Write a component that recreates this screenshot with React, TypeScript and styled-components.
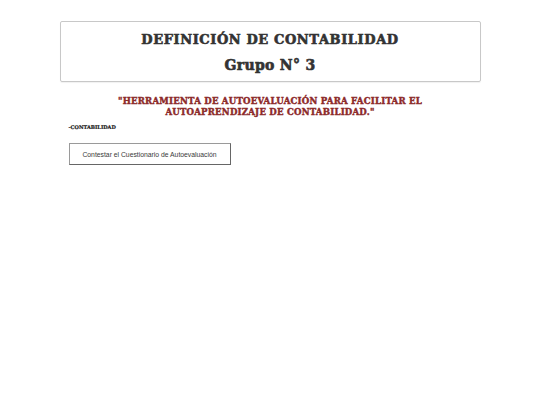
import React from "react";
import styled, { createGlobalStyle } from "styled-components";

const Global = createGlobalStyle`
  html, body { margin: 0; padding: 0; background: #fff; }
  body { font-family: "Liberation Sans", Arial, sans-serif; }
`;

const Page = styled.div`
  width: 421px;
  margin: 0 auto;
  padding-top: 21px;
`;

const Header = styled.header`
  border: 1px solid #c8c8c8;
  border-radius: 2px;
  height: 59px;
  display: flex;
  flex-direction: column;
  align-items: center;
  box-shadow: 0 1px 1px rgba(0,0,0,0.06);
`;

const Slab = styled.h1<{ $size: number; $top: number; $spacing: number }>`
  margin: ${(p) => p.$top}px 0 0;
  font-family: "DejaVu Serif", serif;
  font-weight: 900;
  font-size: ${(p) => p.$size}px;
  line-height: 1;
  color: #333;
  letter-spacing: ${(p) => p.$spacing}px;
  -webkit-text-stroke: 0.6px #333;
`;

const Motto = styled.p`
  margin: 14px 0 0;
  text-align: center;
  font-family: "DejaVu Serif", serif;
  font-weight: 900;
  font-size: 8.6px;
  line-height: 10.5px;
  color: #8c2a2a;
  letter-spacing: 0.2px;
  -webkit-text-stroke: 0.4px #8c2a2a;
`;

const Content = styled.div`
  padding-left: 9px;
`;

const Label = styled.div`
  margin-top: 7px;
  font-family: "DejaVu Serif", serif;
  font-weight: 900;
  font-size: 5px;
  color: #222;
  -webkit-text-stroke: 0.2px #222;
`;

const Button = styled.button`
  margin-top: 13px;
  width: 162px;
  height: 22px;
  background: #fff;
  border: 1px solid #9a9a9a;
  border-right-color: #666;
  border-bottom-color: #666;
  font-family: "Liberation Sans", Arial, sans-serif;
  font-size: 6.8px;
  color: #3a3a3a;
  padding: 0;
`;

export default function App() {
  return (
    <>
      <Global />
      <Page>
        <Header>
          <Slab $size={13} $top={11} $spacing={0.6}>DEFINICIÓN DE CONTABILIDAD</Slab>
          <Slab $size={14} $top={12} $spacing={0.3}>Grupo N° 3</Slab>
        </Header>
        <Motto>
          "HERRAMIENTA DE AUTOEVALUACIÓN PARA FACILITAR EL
          <br />
          AUTOAPRENDIZAJE DE CONTABILIDAD."
        </Motto>
        <Content>
          <Label>-CONTABILIDAD</Label>
          <Button>Contestar el Cuestionario de Autoevaluación</Button>
        </Content>
      </Page>
    </>
  );
}
